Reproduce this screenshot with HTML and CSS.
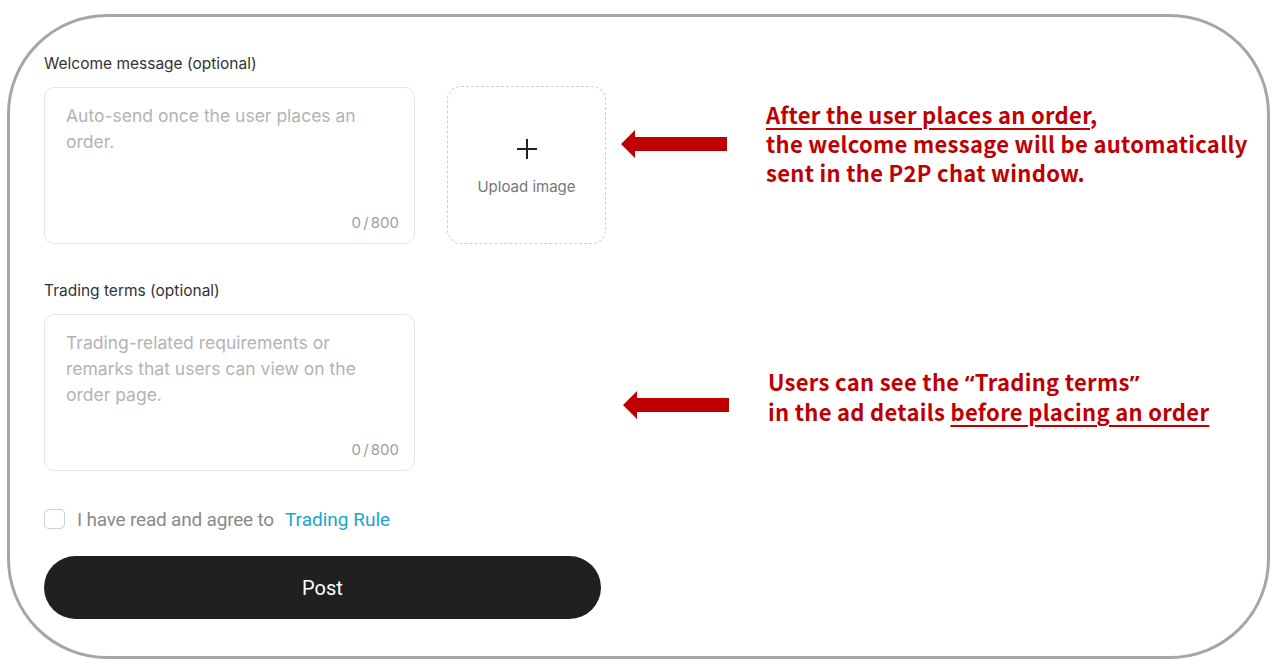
FILE: index.html
```html
<!DOCTYPE html>
<html lang="en">
  <head>
    <meta charset="UTF-8" />
    <meta name="viewport" content="width=device-width, initial-scale=1.0" />
    <title>Post ad</title>
    <link rel="stylesheet" href="styles.css">
  </head>
  <body>
    <div class="frame">
      <div class="field">
        <div class="label">Welcome message (optional)</div>
        <div class="row">
          <div class="textbox">
            <div class="placeholder">Auto-send once the user places an order.</div>
            <div class="counter">0 / 800</div>
          </div>
          <div class="upload">
            <svg class="plus" width="22" height="22" viewBox="0 0 22 22">
              <path d="M11 1v20M1 11h20" stroke="#222" stroke-width="2" fill="none" />
            </svg>
            <div class="upload-text">Upload image</div>
          </div>
          <div class="note note-welcome">
            <svg class="arrow" width="106" height="28" viewBox="0 0 106 28">
              <polygon points="0,14 14,0 14,7 106,7 106,21 14,21 14,28" fill="#c00000" />
            </svg>
            <div class="note-text">
              <span class="ul">After the user places an order</span>,<br>
              the welcome message will be automatically<br>
              sent in the P2P chat window.
            </div>
          </div>
        </div>
      </div>

      <div class="field field-terms">
        <div class="label">Trading terms (optional)</div>
        <div class="row">
          <div class="textbox">
            <div class="placeholder">Trading-related requirements or remarks that users can view on the order page.</div>
            <div class="counter">0 / 800</div>
          </div>
          <div class="note note-terms">
            <svg class="arrow" width="106" height="28" viewBox="0 0 106 28">
              <polygon points="0,14 14,0 14,7 106,7 106,21 14,21 14,28" fill="#c00000" />
            </svg>
            <div class="note-text">
              Users can see the <span class="quote">“</span>Trading terms<span class="quote">”</span><br>
              in the ad details <span class="ul">before placing an order</span>
            </div>
          </div>
        </div>
      </div>

      <label class="agree">
        <span class="checkbox"></span>
        <span class="agree-text">I have read and agree to</span>
        <a class="rule-link">Trading Rule</a>
      </label>

      <button class="post-btn">Post</button>
    </div>
  </body>
</html>
```

FILE: styles.css
```css
html {
  overflow: hidden;
}

body {
  margin: 0;
  padding: 0;
  background-color: #ffffff;
  font-family: Inter, "Noto Sans", sans-serif;
}

.frame {
  box-sizing: border-box;
  width: 1263px;
  height: 645px;
  margin: 14px 0 0 7px;
  border: 3px solid #a6a6a6;
  border-radius: 100px;
  padding: 37px 0 0 34px;
}

.label {
  font-size: 15.5px;
  line-height: 20px;
  color: #333333;
  margin-bottom: 13px;
}

.field-terms {
  margin-top: 37px;
}

.row {
  display: flex;
  align-items: flex-start;
}

.textbox {
  box-sizing: border-box;
  width: 371px;
  height: 157px;
  border: 1px solid #e6e6e6;
  border-radius: 10px;
  padding: 15px 15px 10px 21px;
  display: flex;
  flex-direction: column;
  justify-content: space-between;
}

.placeholder {
  font-size: 17.5px;
  line-height: 26px;
  color: #b3b3b3;
}

.counter {
  text-align: right;
  font-size: 15px;
  line-height: 20px;
  color: #9e9e9e;
  word-spacing: -2px;
}

.upload {
  box-sizing: border-box;
  width: 159px;
  height: 158px;
  margin-left: 32px;
  margin-top: -1px;
  border: 1px dashed #cfcfcf;
  border-radius: 14px;
  display: flex;
  flex-direction: column;
  align-items: center;
  padding-top: 51px;
}

.upload-text {
  margin-top: 17px;
  font-size: 15px;
  line-height: 20px;
  color: #777777;
}

.note {
  display: flex;
  align-items: center;
}

.note-welcome {
  margin-left: 15px;
  margin-top: 13px;
}

.note-terms {
  margin-left: 208px;
  margin-top: 53px;
}

.note-terms .arrow {
  margin-top: 16px;
}

.arrow {
  flex-shrink: 0;
  margin-right: 39px;
}

.note-text {
  font-family: "Noto Sans CJK SC", "Noto Sans", sans-serif;
  font-weight: bold;
  font-size: 22px;
  line-height: 29px;
  letter-spacing: 0.3px;
  color: #c00000;
  white-space: nowrap;
}

.quote {
  font-family: "Noto Sans", sans-serif;
}

.ul {
  text-decoration: underline;
  text-decoration-thickness: 2px;
  text-underline-offset: 4px;
}

.agree {
  display: flex;
  align-items: center;
  margin-top: 38px;
  height: 20px;
}

.checkbox {
  box-sizing: border-box;
  width: 21px;
  height: 20px;
  border: 1px solid #d0d0d0;
  border-radius: 5px;
  margin-right: 12px;
}

.agree-text {
  font-family: Roboto, sans-serif;
  font-size: 19px;
  letter-spacing: -0.2px;
  color: #8a8a8a;
  margin-right: 11px;
}

.rule-link {
  font-family: Roboto, sans-serif;
  font-size: 19px;
  color: #1aa6cf;
}

.post-btn {
  display: block;
  margin-top: 27px;
  width: 557px;
  height: 63px;
  border: none;
  border-radius: 32px;
  background-color: #202020;
  color: #ffffff;
  font-family: Roboto, sans-serif;
  font-size: 20px;
  cursor: pointer;
}
```
